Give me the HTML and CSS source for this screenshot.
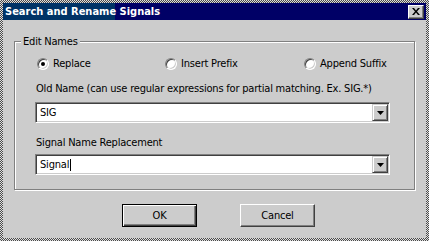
FILE: index.html
```html
<!DOCTYPE html>
<html lang="en">
<head>
  <meta charset="UTF-8">
  <title>Search and Rename Signals</title>
  <link rel="stylesheet" href="styles.css">
</head>
<body>
  <div class="window">
    <div class="frame">
      <div class="titlebar">
        <span class="title">Search and Rename Signals</span>
        <span class="close-btn">
          <svg width="8" height="7" viewBox="0 0 8 7"><path d="M0 0h2l2 2.5 2-2.5h2l-3 3.5 3 3.5h-2l-2-2.5-2 2.5h-2l3-3.5z" fill="#000"/></svg>
        </span>
      </div>

      <!-- Edit Names group -->
      <div class="group">
        <span class="group-title">Edit Names</span>
        <div class="radios">
          <label class="radio"><span class="radio-dot checked"></span>Replace</label>
          <label class="radio"><span class="radio-dot"></span>Insert Prefix</label>
          <label class="radio"><span class="radio-dot"></span>Append Suffix</label>
        </div>

        <div class="field-label">Old Name (can use regular expressions for partial matching. Ex. SIG.*)</div>
        <div class="combo">
          <span class="combo-text">SIG</span>
          <span class="combo-btn"><svg width="7" height="4" viewBox="0 0 7 4"><path d="M0 0h7l-3.5 4z" fill="#000"/></svg></span>
        </div>

        <div class="field-label second">Signal Name Replacement</div>
        <div class="combo second">
          <span class="combo-text">Signal<span class="caret"></span></span>
          <span class="combo-btn"><svg width="7" height="4" viewBox="0 0 7 4"><path d="M0 0h7l-3.5 4z" fill="#000"/></svg></span>
        </div>
      </div>

      <div class="buttons">
        <div class="btn default">OK</div>
        <div class="btn">Cancel</div>
      </div>
    </div>
  </div>
</body>
</html>
```

FILE: styles.css
```css
body {
  margin: 0;
  font-family: "DejaVu Sans", "Liberation Sans", sans-serif;
  font-stretch: condensed;
  font-size: 11px;
  color: #000;
}
.window {
  width: 429px;
  height: 241px;
  box-sizing: border-box;
  padding: 3px;
  background: repeating-conic-gradient(#4a4a4a 0 25%, #e0e0e0 0 50%) 0 0 / 2px 2px;
}
.frame {
  height: 100%;
  background: #cccccc;
  display: flex;
  flex-direction: column;
}
.titlebar {
  height: 17px;
  display: flex;
  align-items: center;
  padding-left: 2px;
  background: linear-gradient(to right, #003366 112px, #000066 112px);
  color: #fff;
  font-weight: bold;
}
.title {
  flex: 1;
  line-height: 17px;
}
.close-btn {
  width: 16px;
  height: 14px;
  box-sizing: border-box;
  margin-right: 2px;
  background: #cccccc;
  border: 1px solid;
  border-color: #fff #404040 #404040 #fff;
  box-shadow: inset -1px -1px 0 #808080;
  display: flex;
  align-items: center;
  justify-content: center;
}
.group {
  margin: 21px 11px 0;
  height: 149px;
  box-sizing: border-box;
  border: 1px solid #808080;
  box-shadow: inset 1px 1px 0 #fff, 1px 1px 0 #fff;
  display: flex;
  flex-direction: column;
  letter-spacing: -0.2px;
}
.group-title {
  align-self: flex-start;
  margin: -7px 0 0 6px;
  padding: 0 2px;
  line-height: 13px;
  background: #cccccc;
}
.radios {
  display: grid;
  grid-template-columns: 128px 139px auto;
  height: 12px;
  margin: 9px 0 0 22px;
}
.radio {
  display: flex;
  align-items: center;
  gap: 4px;
  line-height: 13px;
}
.radio-dot {
  width: 12px;
  height: 12px;
  box-sizing: border-box;
  border-radius: 50%;
  background: #fff;
  border: 1px solid;
  border-color: #808080 #fff #fff #808080;
  box-shadow: inset 1px 1px 0 #404040, inset -1px -1px 0 #cccccc;
  display: flex;
  align-items: center;
  justify-content: center;
}
.radio-dot.checked::after {
  content: "";
  width: 4px;
  height: 4px;
  border-radius: 50%;
  background: #000;
}
.field-label {
  margin: 13px 0 0 21px;
  line-height: 13px;
}
.combo {
  margin: 7px 0 0 20px;
  width: 355px;
  height: 21px;
  box-sizing: border-box;
  padding: 1px;
  background: #fff;
  border: 1px solid;
  border-color: #808080 #fff #fff #808080;
  box-shadow: inset 1px 1px 0 #404040, inset -1px -1px 0 #cccccc;
  display: flex;
  align-items: center;
}
.combo.second {
  margin-top: 5px;
}
.combo-text {
  flex: 1;
  padding-left: 3px;
  line-height: 13px;
  display: flex;
  align-items: center;
}
.caret {
  width: 1px;
  height: 12px;
  margin-left: 1px;
  background: #000;
}
.combo-btn {
  width: 16px;
  height: 17px;
  box-sizing: border-box;
  background: #cccccc;
  border: 1px solid;
  border-color: #cccccc #404040 #404040 #cccccc;
  box-shadow: inset 1px 1px 0 #fff, inset -1px -1px 0 #808080;
  display: flex;
  align-items: center;
  justify-content: center;
}
.buttons {
  display: flex;
  gap: 43px;
  margin: 14px 0 0 119px;
  letter-spacing: -0.2px;
}
.btn {
  width: 75px;
  height: 23px;
  box-sizing: border-box;
  border: 1px solid;
  border-color: #fff #404040 #404040 #fff;
  box-shadow: inset -1px -1px 0 #808080;
  display: flex;
  align-items: center;
  justify-content: center;
}
.btn.default {
  border: 1px solid #000;
  box-shadow: inset 1px 1px 0 #fff, inset -1px -1px 0 #404040, inset -2px -2px 0 #808080;
}
```
